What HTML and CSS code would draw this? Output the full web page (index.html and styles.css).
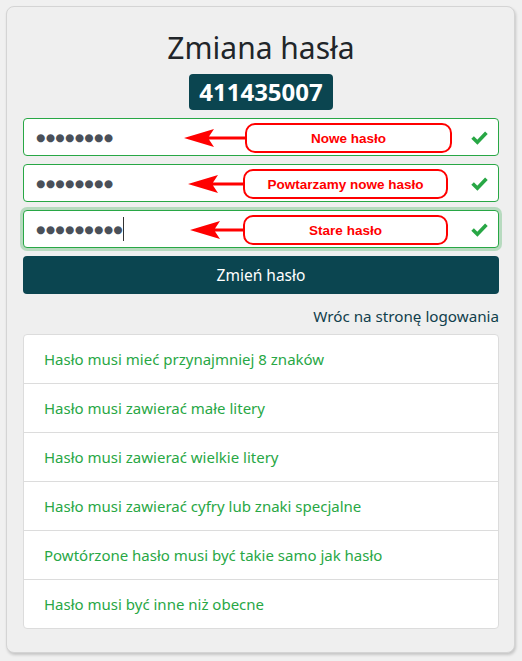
FILE: index.html
```html
<!DOCTYPE html>
<html lang="pl">
<head>
<meta charset="utf-8">
<title>Zmiana hasła</title>
<link rel="stylesheet" href="styles.css">
</head>
<body>
<div class="card">
  <h2 class="title">Zmiana hasła</h2>
  <div class="badge-row"><span class="badge">411435007</span></div>

  <div class="field">
    <div class="dots">●●●●●●●●</div>
    <svg class="check" viewBox="0 0 16 14" width="17" height="15"><path d="M1.5 7 L6 11.5 L14.5 2.5" fill="none" stroke="#28a745" stroke-width="3.4"/></svg>
    <div class="note">
      <svg class="arrow" viewBox="0 0 62 22" width="62" height="22"><path d="M0 11 L30 2 L25 9.5 L62 9.5 L62 12.5 L25 12.5 L30 20 Z" fill="#ff0000"/></svg>
      <div class="note-box">Nowe hasło</div>
    </div>
  </div>

  <div class="field">
    <div class="dots">●●●●●●●●</div>
    <svg class="check" viewBox="0 0 16 14" width="17" height="15"><path d="M1.5 7 L6 11.5 L14.5 2.5" fill="none" stroke="#28a745" stroke-width="3.4"/></svg>
    <div class="note note-2">
      <svg class="arrow" viewBox="0 0 56 22" width="56" height="22"><path d="M0 11 L30 2 L25 9.5 L56 9.5 L56 12.5 L25 12.5 L30 20 Z" fill="#ff0000"/></svg>
      <div class="note-box">Powtarzamy nowe hasło</div>
    </div>
  </div>

  <div class="field focused">
    <div class="dots">●●●●●●●●●<span class="caret"></span></div>
    <svg class="check" viewBox="0 0 16 14" width="17" height="15"><path d="M1.5 7 L6 11.5 L14.5 2.5" fill="none" stroke="#28a745" stroke-width="3.4"/></svg>
    <div class="note note-3">
      <svg class="arrow" viewBox="0 0 54 22" width="54" height="22"><path d="M0 11 L30 2 L25 9.5 L54 9.5 L54 12.5 L25 12.5 L30 20 Z" fill="#ff0000"/></svg>
      <div class="note-box">Stare hasło</div>
    </div>
  </div>

  <button class="btn">Zmień hasło</button>

  <div class="link-row"><a class="link">Wróc na stronę logowania</a></div>

  <ul class="rules">
    <li>Hasło musi mieć przynajmniej 8 znaków</li>
    <li>Hasło musi zawierać małe litery</li>
    <li>Hasło musi zawierać wielkie litery</li>
    <li>Hasło musi zawierać cyfry lub znaki specjalne</li>
    <li>Powtórzone hasło musi być takie samo jak hasło</li>
    <li>Hasło musi być inne niż obecne</li>
  </ul>
</div>
</body>
</html>
```

FILE: styles.css
```css
* { box-sizing: border-box; }
html, body { margin: 0; padding: 0; }
body {
  background: #f0f0f0;
  font-family: "Noto Sans", "Open Sans", sans-serif;
  color: #212529;
  padding: 6px 0 0 6px;
  width: 522px;
  height: 661px;
  overflow: hidden;
}
.card {
  width: 509px;
  height: 647px;
  background: #efefef;
  border: 1px solid #d4d4d4;
  border-radius: 8px;
  box-shadow: 1px 2px 3px rgba(0,0,0,0.18);
  padding: 0 15px 0 16px;
}
.title {
  margin: 0;
  padding-top: 21px;
  height: 67px;
  text-align: center;
  font-weight: 400;
  font-size: 30px;
  line-height: 40px;
  color: #212529;
}
.badge-row { display: flex; justify-content: center; height: 36px; margin-bottom: 8px; }
.badge {
  background: #0b4550;
  color: #fff;
  font-family: "Open Sans", sans-serif;
  font-weight: 700;
  font-size: 24px;
  line-height: 36px;
  padding: 0 10px;
  border-radius: 4px;
  width: 144px;
  text-align: center;
}
.field {
  position: relative;
  height: 38px;
  background: #fff;
  border: 1px solid #28a745;
  border-radius: 4px;
  margin-bottom: 8px;
  display: flex;
  align-items: center;
  padding: 0 10px 0 12px;
}
.field.focused { box-shadow: 0 0 0 3px rgba(40,167,69,0.28); }
.dots {
  flex: 1;
  font-family: "DejaVu Sans", sans-serif;
  font-size: 10.5px;
  letter-spacing: 0.5px;
  color: #4a5059;
  display: flex;
  align-items: center;
}
.caret { display: inline-block; width: 1px; height: 24px; background: #333; margin-left: 0; }
.check { display: block; margin-right: 0; }
.note {
  position: absolute;
  left: 160px;
  top: 4px;
  display: flex;
  align-items: center;
}
.note-2 { left: 164px; }
.note-3 { left: 166px; }
.arrow { display: block; }
.note-box {
  width: 207px;
  height: 30px;
  border: 2px solid #ff0000;
  border-radius: 10px;
  background: #fff;
  color: #ff0000;
  font-family: "Liberation Sans", Arial, sans-serif;
  font-weight: 700;
  font-size: 13.5px;
  display: flex;
  align-items: center;
  justify-content: center;
  margin-left: -1px;
}
.note-2 .note-box, .note-3 .note-box { width: 205px; }
.btn {
  display: block;
  width: 100%;
  height: 38px;
  background: #0b4550;
  color: #fff;
  border: 0;
  border-radius: 4px;
  font-family: "Noto Sans", sans-serif;
  font-size: 15.5px;
  margin-top: 0;
}
.link-row { text-align: right; height: 40px; padding-top: 10px; }
.link { color: #11404c; font-size: 15.2px; line-height: 24px; }
.rules {
  list-style: none;
  margin: 0;
  padding: 0;
  background: #fff;
  border: 1px solid #dcdcdc;
  border-radius: 4px;
}
.rules li {
  height: 49px;
  padding: 12px 20px;
  color: #28a745;
  font-size: 15px;
  line-height: 24px;
  border-top: 1px solid #dcdcdc;
}
.rules li:first-child { border-top: 0; height: 48px; }
```
